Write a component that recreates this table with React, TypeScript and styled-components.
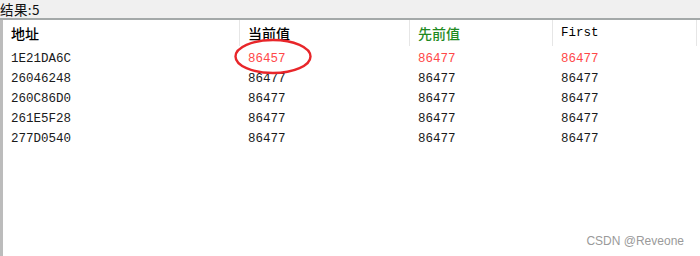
import React, { FC } from 'react';
import styled, { createGlobalStyle } from 'styled-components';

// plain list of scan results, like the old memory scanner window
type Row = { addr: string; cur: string; prev: string; first: string; changed?: boolean };

const rows: Row[] = [
  { addr: '1E21DA6C', cur: '86457', prev: '86477', first: '86477', changed: true },
  { addr: '26046248', cur: '86477', prev: '86477', first: '86477' },
  { addr: '260C86D0', cur: '86477', prev: '86477', first: '86477' },
  { addr: '261E5F28', cur: '86477', prev: '86477', first: '86477' },
  { addr: '277D0540', cur: '86477', prev: '86477', first: '86477' },
];

const GlobalStyle = createGlobalStyle`
  body {
    margin: 0;
    background: #ffffff;
  }
`;

const Page = styled.div`
  position: relative;
  width: 700px;
  height: 256px;
  display: flex;
  flex-direction: column;
  overflow: hidden;
  background: #fff;
`;

const StatusBar = styled.div`
  height: 18px;
  line-height: 18px;
  background: #f0f0f0;
  border-bottom: 2px solid #a4a9a9;
  font-family: "Noto Sans CJK SC", "Noto Sans", sans-serif;
  font-size: 13.5px;
  color: #111;
  letter-spacing: 0.4px;
`;

const ListPanel = styled.div`
  flex: 1;
  border-left: 3px solid #bcbcbc;
`;

const Grid = styled.div`
  display: grid;
  grid-template-columns: 237px 170px 143px 144px;
`;

const HeadCell = styled.div<{ $color?: string; $mono?: boolean }>`
  height: 26px;
  line-height: 26px;
  padding-left: 8px;
  margin: 0 0 3px;
  border-right: 1px solid #e6e6e6;
  color: ${(p) => p.$color || '#000'};
  font-family: ${(p) =>
    p.$mono ? '"Liberation Mono", monospace' : '"Noto Sans CJK SC", sans-serif'};
  font-size: ${(p) => (p.$mono ? '12.5px' : '14px')};
  font-weight: ${(p) => (p.$mono ? 400 : 500)};
`;

const Cell = styled.div<{ $red?: boolean }>`
  height: 20px;
  line-height: 20px;
  padding-left: 8px;
  font-family: "Liberation Mono", "Courier New", monospace;
  font-size: 12.5px;
  color: ${(p) => (p.$red ? '#ff4848' : '#1a1a1a')};
`;

const Circle = styled.svg`
  position: absolute;
  left: 233px;
  top: 38px;
`;

const Watermark = styled.div`
  position: absolute;
  right: 16px;
  bottom: 8px;
  font-family: "Liberation Sans", Arial, sans-serif;
  font-size: 12px;
  color: #9a9a9a;
`;

const App: FC = () => (
  <Page>
    <GlobalStyle />
    <StatusBar>结果:5</StatusBar>
    <ListPanel>
      <Grid>
        <HeadCell>地址</HeadCell>
        <HeadCell>当前值</HeadCell>
        <HeadCell $color="#1f8a1f">先前值</HeadCell>
        <HeadCell $mono>First</HeadCell>
        {rows.map((r) => (
          <React.Fragment key={r.addr}>
            <Cell>{r.addr}</Cell>
            <Cell $red={r.changed}>{r.cur}</Cell>
            <Cell $red={r.changed}>{r.prev}</Cell>
            <Cell $red={r.changed}>{r.first}</Cell>
          </React.Fragment>
        ))}
      </Grid>
    </ListPanel>
    {/* hand drawn marker round the changed value */}
    <Circle width="80" height="37" viewBox="0 0 80 37">
      <ellipse cx="40" cy="18.5" rx="37.5" ry="16.5" fill="none" stroke="#e8262a" strokeWidth="2.4" />
    </Circle>
    <Watermark>CSDN @Reveone</Watermark>
  </Page>
);

export default App;
